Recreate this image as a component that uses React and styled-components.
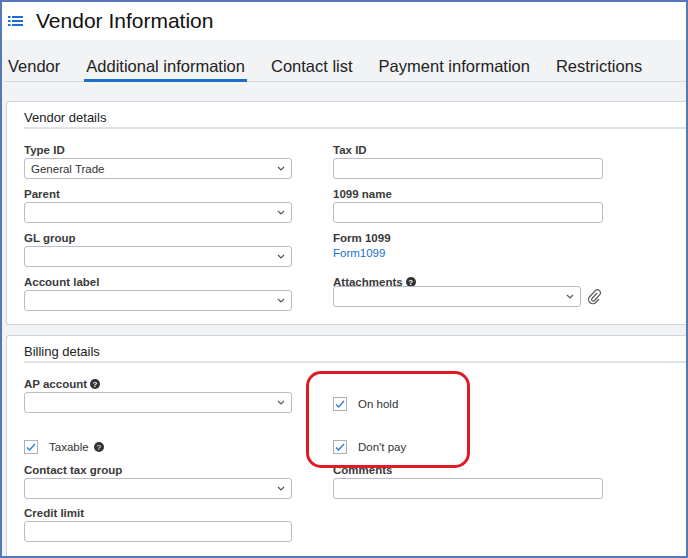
import React from "react";
import styled, { createGlobalStyle } from "styled-components";

const Global = createGlobalStyle`
  html, body { margin: 0; padding: 0; background: #fff; }
  body { font-family: "Liberation Sans", Arial, sans-serif; color: #222; }
`;

const Frame = styled.div`
  position: relative;
  width: 688px;
  height: 558px;
  box-sizing: border-box;
  border: 2px solid #5578b8;
  overflow: hidden;
  background: #f2f3f5;
`;

const Header = styled.div`
  height: 38px;
  background: #fff;
  display: flex;
  align-items: center;
  gap: 12px;
  padding-left: 6px;
`;

const Title = styled.h1`
  margin: 0;
  font-size: 21px;
  font-weight: normal;
  color: #111;
`;

const Tabs = styled.div`
  display: flex;
  gap: 22px;
  margin: 0 0 0 2px;
  padding: 17px 0 0 2px;
  border-bottom: 1px solid #d6d9dd;
`;

const Tab = styled.div`
  font-size: 16.5px;
  color: #222;
  padding: 0 2px 3px;
  border-bottom: 3px solid ${({ active }) => (active ? "#1a6fcf" : "transparent")};
  margin-bottom: -1px;
`;

const Panel = styled.div`
  background: #fff;
  border: 1px solid #d0d4d8;
  border-right: none;
  border-radius: 3px 0 0 3px;
  margin: ${({ top }) => top}px 0 0 4px;
  padding: 8px 0 ${({ bottom }) => bottom}px 17px;
`;

const SectionTitle = styled.div`
  font-size: 13px;
  padding-bottom: 2px;
  border-bottom: 2px solid #dfe2e6;
  margin-bottom: 13px;
`;

const Columns = styled.div`
  display: flex;
  gap: 41px;
`;

const Col = styled.div`
  width: ${({ w }) => w}px;
  display: flex;
  flex-direction: column;
`;

const Field = styled.div`
  height: ${({ h }) => h || 44}px;
  display: flex;
  flex-direction: column;
`;

const Label = styled.div`
  font-size: 11.5px;
  font-weight: bold;
  color: #3a3a3a;
  height: 16px;
  display: flex;
  align-items: center;
  gap: 3px;
`;

const Input = styled.div`
  box-sizing: border-box;
  height: 21px;
  width: ${({ w }) => w || "100%"};
  border: 1px solid #b9bec4;
  border-radius: 3px;
  background: #fff;
  display: flex;
  align-items: center;
  justify-content: space-between;
  padding: 0 6px;
  font-size: 11.5px;
  color: #333;
`;

const Link = styled.div`
  font-size: 11.5px;
  color: #1a6fcf;
  margin-top: 1px;
`;

const Check = styled.div`
  display: flex;
  align-items: center;
  gap: 11px;
  font-size: 11.5px;
  color: #333;
  height: 16px;
`;

const Box = styled.div`
  width: 14px;
  height: 14px;
  box-sizing: border-box;
  border: 1px solid #a8b0b8;
  display: flex;
  align-items: center;
  justify-content: center;
`;

const Help = styled.span`
  display: inline-flex;
  width: 10px;
  height: 10px;
  border-radius: 50%;
  background: #333;
  color: #fff;
  font-size: 8px;
  align-items: center;
  justify-content: center;
  margin-left: ${({ gap }) => gap || 0}px;
`;

const AttachRow = styled.div`
  display: flex;
  align-items: center;
  gap: 6px;
  margin-top: -4px;
`;

const Spacer = styled.div`
  height: ${({ h }) => h}px;
`;

const Annotation = styled.div`
  position: absolute;
  left: 304px;
  top: 369px;
  width: 164px;
  height: 97px;
  box-sizing: border-box;
  border: 3px solid #e01b24;
  border-radius: 15px;
`;

const Caret = () => (
  <svg width="8" height="5" viewBox="0 0 8 5">
    <path d="M1 1l3 3 3-3" fill="none" stroke="#555" strokeWidth="1.2" />
  </svg>
);

const Tick = () => (
  <svg width="10" height="8" viewBox="0 0 10 8">
    <path d="M1 4.5l2.5 2.5L9 1" fill="none" stroke="#2f7dd6" strokeWidth="1.4" />
  </svg>
);

const Select = ({ value, w }) => (
  <Input w={w}>
    <span>{value}</span>
    <Caret />
  </Input>
);

const Checkbox = ({ label, help }) => (
  <Check>
    <Box><Tick /></Box>
    <span>{label}</span>
    {help && <Help gap={-6}>?</Help>}
  </Check>
);

export default function App() {
  return (
    <>
      <Global />
      <Frame>
        <Header>
          <svg width="16" height="14" viewBox="0 0 16 14">
            <g fill="#1a6fcf">
              <rect x="0" y="2" width="2.5" height="2" />
              <rect x="0" y="6" width="2.5" height="2" />
              <rect x="0" y="10" width="2.5" height="2" />
              <rect x="4" y="2" width="11" height="2" />
              <rect x="4" y="6" width="11" height="2" />
              <rect x="4" y="10" width="11" height="2" />
            </g>
          </svg>
          <Title>Vendor Information</Title>
        </Header>
        <Tabs>
          <Tab>Vendor</Tab>
          <Tab active>Additional information</Tab>
          <Tab>Contact list</Tab>
          <Tab>Payment information</Tab>
          <Tab>Restrictions</Tab>
        </Tabs>

        <Panel top={19} bottom={13}>
          <SectionTitle>Vendor details</SectionTitle>
          <Columns>
            <Col w={268}>
              <Field><Label>Type ID</Label><Select value="General Trade" /></Field>
              <Field><Label>Parent</Label><Select /></Field>
              <Field><Label>GL group</Label><Select /></Field>
              <Field h={37}><Label>Account label</Label><Select /></Field>
            </Col>
            <Col w={270}>
              <Field><Label>Tax ID</Label><Input /></Field>
              <Field><Label>1099 name</Label><Input /></Field>
              <Field><Label>Form 1099</Label><Link>Form1099</Link></Field>
              <Field h={37}>
                <Label>Attachments <Help>?</Help></Label>
                <AttachRow>
                  <Select w="248px" />
                  <svg width="14" height="16" viewBox="0 0 14 16">
                    <path d="M10 4l-5 5.5a1.6 1.6 0 0 0 2.3 2.2l5.3-5.8a3 3 0 0 0-4.3-4.2L2.8 7.5a4.2 4.2 0 0 0 6 6L12 10" fill="none" stroke="#555" strokeWidth="1.2" />
                  </svg>
                </AttachRow>
              </Field>
            </Col>
          </Columns>
        </Panel>

        <Panel top={10} bottom={30}>
          <SectionTitle>Billing details</SectionTitle>
          <Columns>
            <Col w={268}>
              <Field h={63}><Label>AP account <Help>?</Help></Label><Select /></Field>
              <Field h={23}><Checkbox label="Taxable" help /></Field>
              <Field h={43}><Label>Contact tax group</Label><Select /></Field>
              <Field><Label>Credit limit</Label><Input /></Field>
            </Col>
            <Col w={270}>
              <Spacer h={20} />
              <Field h={43}><Checkbox label="On hold" /></Field>
              <Field h={23}><Checkbox label="Don't pay" /></Field>
              <Field><Label>Comments</Label><Input /></Field>
            </Col>
          </Columns>
        </Panel>
        <Annotation />
      </Frame>
    </>
  );
}
